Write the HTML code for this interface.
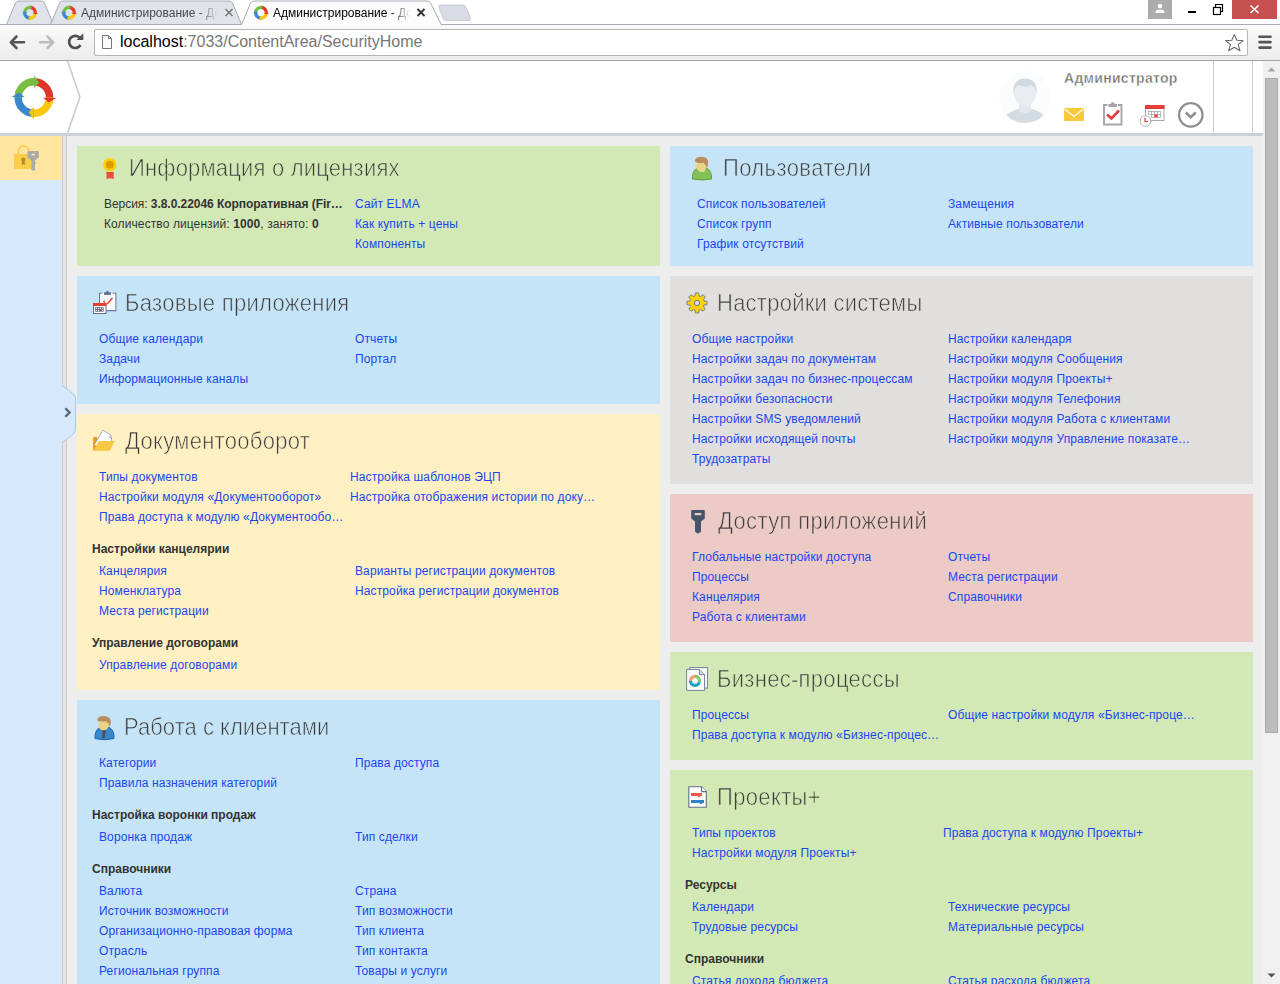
<!DOCTYPE html><html><head><meta charset="utf-8"><title>ELMA</title><style>
html,body{margin:0;padding:0;width:1280px;height:984px;overflow:hidden;background:#ededed;font-family:"Liberation Sans",sans-serif}
.p,.l,.h,.t,.i,.a{position:absolute}
.l{font-size:12px;line-height:20px;color:#1a46f2;white-space:nowrap;letter-spacing:0.12px}
.h{font-size:12px;line-height:20px;color:#333;font-weight:bold;white-space:nowrap}
.tx{font-size:12px;line-height:20px;color:#333;white-space:nowrap;position:absolute;letter-spacing:0.1px}
.t{font-size:22px;line-height:26px;color:#3a3a3a;white-space:nowrap;letter-spacing:0.2px;transform:scaleY(1.07);transform-origin:0 20px}
</style></head><body>
<div class="a" style="left:0;top:0;width:1280px;height:25px;background:#fff"></div>
<div class="a" style="left:0;top:24px;width:1280px;height:36px;background:linear-gradient(#fafafa,#ececec);border-top:1px solid #a9aeb5;box-sizing:border-box"></div>
<div class="a" style="left:0;top:60px;width:1280px;height:1px;background:#a3a3a3"></div>
<div class="a" style="left:94px;top:29px;width:1154px;height:27px;background:#fff;border:1px solid #b5b5b5;border-radius:2px;box-sizing:border-box"></div>
<div class="a" style="left:120px;top:32px;font-size:16px;line-height:20px;color:#777;white-space:nowrap"><span style="color:#000">localhost</span>:7033/ContentArea/SecurityHome</div>
<svg class="a" style="left:0;top:0" width="1280" height="25"><path d="M6.5 24.5 L15.5 3 Q16.5 1 19 1 L41 1 Q43.5 1 44.5 3 L53.5 24.5" fill="#dfe3ea" stroke="#a7acb4" stroke-width="1"/><path d="M50.5 24.5 L59.5 3 Q60.5 1 63 1 L229 1 Q231.5 1 232.5 3 L241.5 24.5" fill="#dfe3ea" stroke="#a7acb4" stroke-width="1"/><path d="M0 24.5 L1280 24.5" stroke="#a8adb4" stroke-width="1"/><path d="M241.5 25 L250.5 3 Q251.5 1 254 1 L427 1 Q429.5 1 430.5 3 L441.5 25" fill="#fcfcfc" stroke="#a7acb4" stroke-width="1"/><path d="M441 5 L463 5 Q465 5 466 7 L470.5 18.5 Q471 20.5 468.5 20.5 L446 20.5 Q444 20.5 443 18.5 L439 7 Q438.5 5 441 5Z" fill="#d8dde5" stroke="#b9bec6" stroke-width="0.7"/></svg>
<svg class="a" style="left:0;top:0" width="480" height="25"><path d="M30.00 7.40 A5.4 5.4 0 0 1 35.39 13.18" stroke="#e0352b" stroke-width="3.3" fill="none"/><path d="M35.40 12.80 A5.4 5.4 0 0 1 29.62 18.19" stroke="#fcc60a" stroke-width="3.3" fill="none"/><path d="M30.00 18.20 A5.4 5.4 0 0 1 24.61 12.42" stroke="#3a86cf" stroke-width="3.3" fill="none"/><path d="M24.60 12.80 A5.4 5.4 0 0 1 30.38 7.41" stroke="#78be43" stroke-width="3.3" fill="none"/><path d="M38.30 12.94 L35.11 14.56 L32.50 12.84Z" fill="#e0352b"/><path d="M29.86 21.10 L28.24 17.91 L29.96 15.30Z" fill="#fcc60a"/><path d="M21.70 12.66 L24.89 11.04 L27.50 12.76Z" fill="#3a86cf"/><path d="M30.14 4.50 L31.76 7.69 L30.04 10.30Z" fill="#78be43"/><path d="M69.00 7.40 A5.4 5.4 0 0 1 74.39 13.18" stroke="#e0352b" stroke-width="3.3" fill="none"/><path d="M74.40 12.80 A5.4 5.4 0 0 1 68.62 18.19" stroke="#fcc60a" stroke-width="3.3" fill="none"/><path d="M69.00 18.20 A5.4 5.4 0 0 1 63.61 12.42" stroke="#3a86cf" stroke-width="3.3" fill="none"/><path d="M63.60 12.80 A5.4 5.4 0 0 1 69.38 7.41" stroke="#78be43" stroke-width="3.3" fill="none"/><path d="M77.30 12.94 L74.11 14.56 L71.50 12.84Z" fill="#e0352b"/><path d="M68.86 21.10 L67.24 17.91 L68.96 15.30Z" fill="#fcc60a"/><path d="M60.70 12.66 L63.89 11.04 L66.50 12.76Z" fill="#3a86cf"/><path d="M69.14 4.50 L70.76 7.69 L69.04 10.30Z" fill="#78be43"/><path d="M261.00 7.40 A5.4 5.4 0 0 1 266.39 13.18" stroke="#e0352b" stroke-width="3.3" fill="none"/><path d="M266.40 12.80 A5.4 5.4 0 0 1 260.62 18.19" stroke="#fcc60a" stroke-width="3.3" fill="none"/><path d="M261.00 18.20 A5.4 5.4 0 0 1 255.61 12.42" stroke="#3a86cf" stroke-width="3.3" fill="none"/><path d="M255.60 12.80 A5.4 5.4 0 0 1 261.38 7.41" stroke="#78be43" stroke-width="3.3" fill="none"/><path d="M269.30 12.94 L266.11 14.56 L263.50 12.84Z" fill="#e0352b"/><path d="M260.86 21.10 L259.24 17.91 L260.96 15.30Z" fill="#fcc60a"/><path d="M252.70 12.66 L255.89 11.04 L258.50 12.76Z" fill="#3a86cf"/><path d="M261.14 4.50 L262.76 7.69 L261.04 10.30Z" fill="#78be43"/></svg>
<div class="a" style="left:81px;top:5px;font-size:12px;line-height:16px;color:#4a4a4a;white-space:nowrap;width:137px;overflow:hidden;-webkit-mask-image:linear-gradient(90deg,#000 85%,transparent)">Администрирование - Документооборот</div>
<div class="a" style="left:273px;top:5px;font-size:12px;line-height:16px;color:#000;white-space:nowrap;width:137px;overflow:hidden;-webkit-mask-image:linear-gradient(90deg,#000 85%,transparent)">Администрирование - Документооборот</div>
<svg class="a" style="left:0;top:0" width="480" height="25"><path d="M225.5 9 L232.5 16 M232.5 9 L225.5 16" stroke="#787878" stroke-width="1.6"/><path d="M417.5 9 L424.5 16 M424.5 9 L417.5 16" stroke="#333" stroke-width="1.8"/></svg>
<div class="a" style="left:1148px;top:0;width:24px;height:19px;background:#acacac"></div>
<svg class="a" style="left:1148px;top:0" width="24" height="19"><circle cx="12" cy="6" r="2.3" fill="#fff"/><path d="M7.5 12.5 Q7.5 9.5 12 9.5 Q16.5 9.5 16.5 12.5 L16.5 13 L7.5 13Z" fill="#fff"/></svg>
<div class="a" style="left:1188px;top:11px;width:8px;height:2px;background:#000"></div>
<svg class="a" style="left:1210px;top:2px" width="16" height="14"><rect x="3.5" y="5.5" width="7" height="7" fill="none" stroke="#000" stroke-width="1.2"/><path d="M5.5 5.5 L5.5 2.5 L12.5 2.5 L12.5 9.5 L10.5 9.5" fill="none" stroke="#000" stroke-width="1.2"/></svg>
<div class="a" style="left:1232px;top:0;width:45px;height:19px;background:#c75050"></div>
<svg class="a" style="left:1232px;top:0" width="45" height="19"><path d="M18.5 5.5 L26.5 13 M26.5 5.5 L18.5 13" stroke="#fff" stroke-width="1.6"/></svg>
<svg class="a" style="left:0;top:25px" width="94" height="35"><path d="M11 17.3 L24 17.3 M16.5 11.5 L10.8 17.3 L16.5 23" stroke="#555" stroke-width="2.6" fill="none" stroke-linecap="round" stroke-linejoin="round"/><path d="M40 17.3 L53 17.3 M47.5 11.5 L53.2 17.3 L47.5 23" stroke="#bdbdbd" stroke-width="2.6" fill="none" stroke-linecap="round" stroke-linejoin="round"/><path d="M80.5 20 A6.1 6.1 0 1 1 79.6 12.6" stroke="#505050" stroke-width="2.7" fill="none"/><path d="M76.5 15 L83.3 15 L83.3 8.2Z" fill="#505050"/></svg>
<svg class="a" style="left:100px;top:33px" width="14" height="18"><path d="M2.5 2.5 L8.5 2.5 L11.5 5.5 L11.5 15.5 L2.5 15.5Z" fill="#fbfbfb" stroke="#777" stroke-width="1"/><path d="M8.5 2.5 L8.5 5.5 L11.5 5.5" fill="none" stroke="#777" stroke-width="1"/></svg>
<svg class="a" style="left:1224px;top:33px" width="22" height="20"><path d="M10.3 1.5 L12.8 7.3 L19 7.6 L14.2 11.6 L15.9 17.7 L10.3 14.2 L4.7 17.7 L6.4 11.6 L1.6 7.6 L7.8 7.3Z" fill="none" stroke="#6b6b6b" stroke-width="1.1" stroke-linejoin="round"/></svg>
<svg class="a" style="left:1256px;top:34px" width="18" height="16"><path d="M3.5 2.7 L14.5 2.7 M3.5 8.1 L14.5 8.1 M3.5 13.6 L14.5 13.6" stroke="#555" stroke-width="2.6" stroke-linecap="round"/></svg>
<div class="a" style="left:0;top:61px;width:1263px;height:72px;background:#fff"></div>
<div class="a" style="left:0;top:133px;width:1263px;height:3px;background:#cdd1d6"></div>
<div class="a" style="left:1213px;top:61px;width:1px;height:72px;background:#c9ced6"></div>
<div class="a" style="left:1252px;top:61px;width:1px;height:72px;background:#c9ced6"></div>
<div class="a" style="left:1064px;top:68px;font-size:14px;line-height:20px;font-weight:bold;color:#6e6e6e;white-space:nowrap;letter-spacing:0.3px;-webkit-text-stroke:0.35px #fff">Администратор</div>
<svg class="a" style="left:0;top:61px" width="90" height="72"><path d="M33.90 20.80 A15.7 15.7 0 0 1 49.56 37.60" stroke="#e0352b" stroke-width="7.4" fill="none"/><path d="M49.60 36.50 A15.7 15.7 0 0 1 32.80 52.16" stroke="#fcc60a" stroke-width="7.4" fill="none"/><path d="M33.90 52.20 A15.7 15.7 0 0 1 18.24 35.40" stroke="#3a86cf" stroke-width="7.4" fill="none"/><path d="M18.20 36.50 A15.7 15.7 0 0 1 35.00 20.84" stroke="#78be43" stroke-width="7.4" fill="none"/><path d="M56.11 36.89 L48.74 41.61 L43.09 36.66Z" fill="#e0352b"/><path d="M33.51 58.71 L28.79 51.34 L33.74 45.69Z" fill="#fcc60a"/><path d="M11.69 36.11 L19.06 31.39 L24.71 36.34Z" fill="#3a86cf"/><path d="M34.29 14.29 L39.01 21.66 L34.06 27.31Z" fill="#78be43"/><path d="M67.5 0 L80 36 L67.5 72" fill="none" stroke="#c8ccd2" stroke-width="1.6"/></svg>
<svg class="a" style="left:998px;top:70px" width="54" height="54"><defs><clipPath id="avc"><circle cx="27" cy="27" r="26"/></clipPath></defs><circle cx="27" cy="27" r="26" fill="#fbfcfd"/><g clip-path="url(#avc)"><path d="M4 52 Q8 42 20 39 L34 39 Q46 42 50 52 L50 56 L4 56Z" fill="#d3dbe3"/><path d="M21 33 L21 41 Q27 45 33 41 L33 33Z" fill="#e3e8ee"/><ellipse cx="27" cy="23" rx="11" ry="13" fill="#e8edf2"/><path d="M15.5 24 Q14 9 27 8.5 Q40 9 38.5 24 Q37 16 33 15 Q27 18 21 15 Q17 16 15.5 24Z" fill="#d0d8e1"/></g></svg>
<svg class="a" style="left:1064px;top:108px" width="21" height="14"><rect x="0" y="0" width="20" height="13" rx="0.8" fill="#f9c93d"/><path d="M0.5 1 L10 8.5 L19.5 1" fill="none" stroke="#fff" stroke-width="1.2"/></svg>
<svg class="a" style="left:1102px;top:102px" width="22" height="25"><path d="M5.5 3 L2 3 L2 22.5 L19.5 22.5 L19.5 3 L16 3" fill="#fff" stroke="#a6a6a6" stroke-width="1.9"/><rect x="6.5" y="2" width="8.5" height="3" fill="#a6a6a6"/><rect x="9" y="0.2" width="3.5" height="2.5" rx="1" fill="#a6a6a6"/><path d="M5 12.5 L9.5 16.5 L17 8.5" fill="none" stroke="#e63c3c" stroke-width="2.6"/></svg>
<svg class="a" style="left:1139px;top:104px" width="28" height="24"><rect x="6.5" y="1.5" width="18.5" height="15" fill="#fff" stroke="#a8a8a8" stroke-width="1"/><rect x="6" y="1" width="19.5" height="4" fill="#e63c3c"/><g fill="#fff" stroke="#a8a8a8" stroke-width="0.8"><rect x="9.5" y="7.5" width="3" height="3"/><rect x="12.5" y="7.5" width="3" height="3"/><rect x="15.5" y="7.5" width="3" height="3"/><rect x="18.5" y="7.5" width="3" height="3"/><rect x="12.5" y="10.5" width="3" height="3"/><rect x="18.5" y="10.5" width="3" height="3"/></g><rect x="15.5" y="10.5" width="3" height="3" fill="#e63c3c"/><circle cx="6.5" cy="17" r="5.3" fill="#fff" stroke="#aaa" stroke-width="0.9"/><path d="M6 13.8 L6 17.5 L9 17.5" fill="none" stroke="#e63c3c" stroke-width="1.2"/></svg>
<svg class="a" style="left:1177px;top:101px" width="28" height="28"><circle cx="13.8" cy="13.9" r="11.7" fill="none" stroke="#8e8e8e" stroke-width="2.2"/><path d="M8.8 11.5 L13.8 16.3 L18.8 11.5" fill="none" stroke="#8e8e8e" stroke-width="2.6"/></svg>
<div class="a" style="left:0;top:136px;width:62px;height:848px;background:#d6e8fb"></div>
<div class="a" style="left:0;top:136px;width:62px;height:44px;background:#ffe6a0"></div>
<div class="a" style="left:62px;top:136px;width:5px;height:848px;background:#e4e4e4;border-left:1px solid #c9c9c9;border-right:1px solid #c9c9c9;box-sizing:border-box"></div>
<svg class="a" style="left:8px;top:140px" width="40" height="40"><path d="M10.5 14.5 L10.5 11 A5.1 5.1 0 0 1 20.7 11 L20.7 14.5" fill="none" stroke="#fccd48" stroke-width="1.9"/><rect x="6" y="14" width="17" height="15" rx="1.2" fill="#fccd48"/><circle cx="15.3" cy="19.5" r="2" fill="#b9862c"/><path d="M14.2 20 L16.4 20 L17 24.5 L13.6 24.5Z" fill="#b9862c"/><path d="M19.5 12 Q19.5 11 20.5 11 L29.8 11 Q30.8 11 30.8 12 L30.8 17.5 L27 20.5 L27 30 Q25 31.5 23.2 30 L23.2 20.5 L19.5 17.5Z" fill="#ababab"/><rect x="23.2" y="13.8" width="4" height="1.6" rx="0.8" fill="#fde7a0"/><rect x="26.5" y="22.5" width="1.5" height="1.5" fill="#ababab"/></svg>
<svg class="a" style="left:55px;top:380px" width="24" height="68"><path d="M0 5.5 L7 5.5 C12 9 20.5 14 20.5 18.5 L20.5 49.5 C20.5 54 12 59 7 62.5 L0 62.5Z" fill="#d6e8fb"/><path d="M7 5.5 C12 9 20.5 14 20.5 18.5 L20.5 49.5 C20.5 54 12 59 7 62.5" fill="none" stroke="#a9c8ea" stroke-width="1"/><path d="M10.3 28.2 L14.6 32.5 L10.3 36.8" fill="none" stroke="#56647a" stroke-width="2.3"/></svg>
<div class="a" style="left:1263px;top:61px;width:17px;height:923px;background:#f0f0f0"></div>
<div class="a" style="left:1265px;top:78px;width:13px;height:655px;background:#bcbcbc;border:1px solid #a9a9a9;box-sizing:border-box"></div>
<div class="p" style="left:77px;top:146px;width:583px;height:120px;background:#d3e9b5"></div>
<div class="p" style="left:77px;top:276px;width:583px;height:128px;background:#c6e4f7"></div>
<div class="p" style="left:77px;top:414px;width:583px;height:276px;background:#fff0c4"></div>
<div class="p" style="left:77px;top:700px;width:583px;height:300px;background:#c6e4f7"></div>
<div class="p" style="left:670px;top:146px;width:583px;height:120px;background:#c6e4f7"></div>
<div class="p" style="left:670px;top:276px;width:583px;height:208px;background:#e0dfdd"></div>
<div class="p" style="left:670px;top:494px;width:583px;height:148px;background:#eccbc6"></div>
<div class="p" style="left:670px;top:652px;width:583px;height:108px;background:#d3e9b5"></div>
<div class="p" style="left:670px;top:770px;width:583px;height:300px;background:#d3e9b5"></div>
<div class="t" style="left:129px;top:156px;letter-spacing:0.2px;-webkit-text-stroke:0.6px #d3e9b5">Информация о лицензиях</div>
<div class="tx" style="left:104px;top:194px;letter-spacing:-0.05px">Версия: <b>3.8.0.22046 Корпоративная (Fir…</b></div>
<div class="tx" style="left:104px;top:214px">Количество лицензий: <b>1000</b>, занято: <b>0</b></div>
<div class="l" style="left:355px;top:194px">Сайт ELMA</div>
<div class="l" style="left:355px;top:214px">Как купить + цены</div>
<div class="l" style="left:355px;top:234px">Компоненты</div>
<div class="t" style="left:125px;top:291px;letter-spacing:0.3px;-webkit-text-stroke:0.6px #c6e4f7">Базовые приложения</div>
<div class="l" style="left:99px;top:329px">Общие календари</div>
<div class="l" style="left:99px;top:349px">Задачи</div>
<div class="l" style="left:99px;top:369px">Информационные каналы</div>
<div class="l" style="left:355px;top:329px">Отчеты</div>
<div class="l" style="left:355px;top:349px">Портал</div>
<div class="t" style="left:125px;top:429px;letter-spacing:0.3px;-webkit-text-stroke:0.6px #fff0c4">Документооборот</div>
<div class="l" style="left:99px;top:467px">Типы документов</div>
<div class="l" style="left:99px;top:487px">Настройки модуля «Документооборот»</div>
<div class="l" style="left:99px;top:507px">Права доступа к модулю «Документообо…</div>
<div class="l" style="left:350px;top:467px">Настройка шаблонов ЭЦП</div>
<div class="l" style="left:350px;top:487px">Настройка отображения истории по доку…</div>
<div class="h" style="left:92px;top:539px">Настройки канцелярии</div>
<div class="l" style="left:99px;top:561px">Канцелярия</div>
<div class="l" style="left:99px;top:581px">Номенклатура</div>
<div class="l" style="left:99px;top:601px">Места регистрации</div>
<div class="l" style="left:355px;top:561px">Варианты регистрации документов</div>
<div class="l" style="left:355px;top:581px">Настройка регистрации документов</div>
<div class="h" style="left:92px;top:633px">Управление договорами</div>
<div class="l" style="left:99px;top:655px">Управление договорами</div>
<div class="t" style="left:124px;top:715px;letter-spacing:0.03px;-webkit-text-stroke:0.6px #c6e4f7">Работа с клиентами</div>
<div class="l" style="left:99px;top:753px">Категории</div>
<div class="l" style="left:99px;top:773px">Правила назначения категорий</div>
<div class="l" style="left:355px;top:753px">Права доступа</div>
<div class="h" style="left:92px;top:805px">Настройка воронки продаж</div>
<div class="l" style="left:99px;top:827px">Воронка продаж</div>
<div class="l" style="left:355px;top:827px">Тип сделки</div>
<div class="h" style="left:92px;top:859px">Справочники</div>
<div class="l" style="left:99px;top:881px">Валюта</div>
<div class="l" style="left:99px;top:901px">Источник возможности</div>
<div class="l" style="left:99px;top:921px">Организационно-правовая форма</div>
<div class="l" style="left:99px;top:941px">Отрасль</div>
<div class="l" style="left:99px;top:961px">Региональная группа</div>
<div class="l" style="left:355px;top:881px">Страна</div>
<div class="l" style="left:355px;top:901px">Тип возможности</div>
<div class="l" style="left:355px;top:921px">Тип клиента</div>
<div class="l" style="left:355px;top:941px">Тип контакта</div>
<div class="l" style="left:355px;top:961px">Товары и услуги</div>
<div class="t" style="left:723px;top:156px;letter-spacing:0.4px;-webkit-text-stroke:0.6px #c6e4f7">Пользователи</div>
<div class="l" style="left:697px;top:194px">Список пользователей</div>
<div class="l" style="left:697px;top:214px">Список групп</div>
<div class="l" style="left:697px;top:234px">График отсутствий</div>
<div class="l" style="left:948px;top:194px">Замещения</div>
<div class="l" style="left:948px;top:214px">Активные пользователи</div>
<div class="t" style="left:717px;top:291px;letter-spacing:0.25px;-webkit-text-stroke:0.6px #e0dfdd">Настройки системы</div>
<div class="l" style="left:692px;top:329px">Общие настройки</div>
<div class="l" style="left:692px;top:349px">Настройки задач по документам</div>
<div class="l" style="left:692px;top:369px">Настройки задач по бизнес-процессам</div>
<div class="l" style="left:692px;top:389px">Настройки безопасности</div>
<div class="l" style="left:692px;top:409px">Настройки SMS уведомлений</div>
<div class="l" style="left:692px;top:429px">Настройки исходящей почты</div>
<div class="l" style="left:692px;top:449px">Трудозатраты</div>
<div class="l" style="left:948px;top:329px">Настройки календаря</div>
<div class="l" style="left:948px;top:349px">Настройки модуля Сообщения</div>
<div class="l" style="left:948px;top:369px">Настройки модуля Проекты+</div>
<div class="l" style="left:948px;top:389px">Настройки модуля Телефония</div>
<div class="l" style="left:948px;top:409px">Настройки модуля Работа с клиентами</div>
<div class="l" style="left:948px;top:429px">Настройки модуля Управление показате…</div>
<div class="t" style="left:718px;top:509px;letter-spacing:0.36px;-webkit-text-stroke:0.6px #eccbc6">Доступ приложений</div>
<div class="l" style="left:692px;top:547px">Глобальные настройки доступа</div>
<div class="l" style="left:692px;top:567px">Процессы</div>
<div class="l" style="left:692px;top:587px">Канцелярия</div>
<div class="l" style="left:692px;top:607px">Работа с клиентами</div>
<div class="l" style="left:948px;top:547px">Отчеты</div>
<div class="l" style="left:948px;top:567px">Места регистрации</div>
<div class="l" style="left:948px;top:587px">Справочники</div>
<div class="t" style="left:717px;top:667px;letter-spacing:0.3px;-webkit-text-stroke:0.6px #d3e9b5">Бизнес-процессы</div>
<div class="l" style="left:692px;top:705px">Процессы</div>
<div class="l" style="left:692px;top:725px">Права доступа к модулю «Бизнес-процес…</div>
<div class="l" style="left:948px;top:705px">Общие настройки модуля «Бизнес-проце…</div>
<div class="t" style="left:717px;top:785px;letter-spacing:0.35px;-webkit-text-stroke:0.6px #d3e9b5">Проекты+</div>
<div class="l" style="left:692px;top:823px">Типы проектов</div>
<div class="l" style="left:692px;top:843px">Настройки модуля Проекты+</div>
<div class="l" style="left:943px;top:823px">Права доступа к модулю Проекты+</div>
<div class="h" style="left:685px;top:875px">Ресурсы</div>
<div class="l" style="left:692px;top:897px">Календари</div>
<div class="l" style="left:692px;top:917px">Трудовые ресурсы</div>
<div class="l" style="left:948px;top:897px">Технические ресурсы</div>
<div class="l" style="left:948px;top:917px">Материальные ресурсы</div>
<div class="h" style="left:685px;top:949px">Справочники</div>
<div class="l" style="left:692px;top:971px">Статья дохода бюджета</div>
<div class="l" style="left:948px;top:971px">Статья расхода бюджета</div>
<svg class="a" style="left:100px;top:155px" width="20" height="26"><path d="M6.2 17 L14 17 Q13.2 20.5 14 24 Q10.1 22.3 6.2 24 Q7 20.5 6.2 17Z" fill="#e84e3c"/><circle cx="9.8" cy="9.7" r="6.8" fill="#fdd00a"/><circle cx="9.8" cy="9.7" r="4" fill="#dc9c00"/></svg>
<svg class="a" style="left:690px;top:155px" width="24" height="26"><path d="M2.5 24 Q1.8 16 7 13.5 L17 13.5 Q22.2 16 21.5 24 Q12 26 2.5 24Z" fill="#82c155" stroke="#5a9a30" stroke-width="0.9"/><path d="M8.5 15.5 L10.8 17 L12 16 L13.2 17 L15.5 15.5Z" fill="#fff"/><ellipse cx="11.3" cy="11.2" rx="5.3" ry="5.2" fill="#ecd284"/><path d="M4.8 6 Q5.5 1.8 11.5 1.8 Q18.5 2 18.1 8.5 Q18 11.5 16.8 13.2 Q16 11 15.8 10 Q14.2 9.5 13.8 7.5 Q9.5 8.5 6.8 7.5 Q4.8 7 4.8 6Z" fill="#b98d5c"/></svg>
<svg class="a" style="left:90px;top:288px" width="30" height="30"><path d="M12.5 5.3 L9.6 5.3 L9.6 22.6 L25.8 22.6 L25.8 5.3 L22.5 5.3" fill="#fff" stroke="#5e7290" stroke-width="1.1"/><rect x="10.2" y="5.8" width="15" height="16.3" fill="#fff"/><rect x="14" y="4.3" width="7" height="2.6" fill="#5e7290"/><circle cx="17.4" cy="4" r="1.3" fill="#5e7290"/><path d="M13.5 13 L15 14.5 M17 16 L22.5 10" fill="none" stroke="#e84030" stroke-width="1.6"/><rect x="3.5" y="15.5" width="12.5" height="10" fill="#fff" stroke="#5e7290" stroke-width="1"/><rect x="3" y="15" width="13.5" height="3" fill="#e84030"/><rect x="5.2" y="19.2" width="8.5" height="4.5" fill="#5e7290"/><g fill="#fff"><rect x="6" y="20" width="1" height="1"/><rect x="8" y="20" width="1" height="1"/><rect x="10" y="20" width="1" height="1"/><rect x="12" y="20" width="1" height="1"/><rect x="6" y="22" width="1" height="1"/><rect x="8" y="22" width="1" height="1"/><rect x="12" y="22" width="1" height="1"/></g><rect x="10" y="21" width="1.6" height="1.8" fill="#e84030"/></svg>
<svg class="a" style="left:88px;top:422px" width="32" height="36"><path d="M5.2 15.5 Q5.2 15 6 15 L9 15 L9 28.5 L5.2 28.5Z" fill="#e8961e"/><path d="M6.5 22.5 L15 8.2 L22.8 13 L23.8 18.8 L10 27Z" fill="#fff" stroke="#9aa5b3" stroke-width="0.9"/><path d="M20.5 16.5 L22 14.5 L23.5 17.2" fill="none" stroke="#9aa5b3" stroke-width="0.8"/><path d="M5.2 28.8 L10.8 19 L26.8 19 L21.8 28.8Z" fill="#f8c842"/></svg>
<svg class="a" style="left:90px;top:712px" width="28" height="30"><path d="M5 26.5 Q4.5 19 9.5 15.5 L19.5 15.5 Q24.5 19 24 26.5 Q14.5 29 5 26.5Z" fill="#3d87c8" stroke="#1563bd" stroke-width="1"/><path d="M12.8 17.5 L14.5 16.8 L16 17.5 L14.5 26.5 L12 26Z" fill="#4c5058"/><path d="M11 15.5 L13 17 L14.5 16.5 L16 17 L18 15.5Z" fill="#fff"/><ellipse cx="13.6" cy="13" rx="5.3" ry="5.2" fill="#ecd284"/><path d="M7.2 8 Q8 4 13.5 3.9 Q20.5 4 20.9 10 Q20.8 13 19.5 14.5 Q18.8 12.5 18.6 11.5 Q17 11 16.5 9.2 Q12 10 9 9.2 Q7 8.8 7.2 8Z" fill="#b98d5c"/></svg>
<svg class="a" style="left:682px;top:288px" width="30" height="30"><polygon points="12.87,8.02 13.40,4.93 16.60,4.93 17.13,8.02 18.43,8.55 21.00,6.75 23.25,9.00 21.45,11.57 21.98,12.87 25.07,13.40 25.07,16.60 21.98,17.13 21.45,18.43 23.25,21.00 21.00,23.25 18.43,21.45 17.13,21.98 16.60,25.07 13.40,25.07 12.87,21.98 11.57,21.45 9.00,23.25 6.75,21.00 8.55,18.43 8.02,17.13 4.93,16.60 4.93,13.40 8.02,12.87 8.55,11.57 6.75,9.00 9.00,6.75 11.57,8.55" fill="#fdd000" stroke="#5d6b92" stroke-width="0.8" stroke-linejoin="round"/><circle cx="15" cy="15" r="2.6" fill="#e0dfdd" stroke="#5d6b92" stroke-width="0.9"/></svg>
<svg class="a" style="left:682px;top:504px" width="30" height="34"><path d="M9.2 7 Q9.2 6 10.2 6 L21.8 6 Q22.8 6 22.8 7 L22.8 14.5 L19 17.5 L19 27.5 Q17 29.5 16 29.5 Q15 29.5 13 27.5 L13 17.5 L9.2 14.5Z" fill="#44556a"/><rect x="12.7" y="9" width="6.6" height="2.2" fill="#ecc9c4"/></svg>
<svg class="a" style="left:682px;top:662px" width="30" height="34"><rect x="7.8" y="5.6" width="17.8" height="20.5" fill="#f4f6fa" stroke="#6b7a92" stroke-width="0.9"/><path d="M4.6 7.5 L17.4 7.5 L22.5 12.6 L22.5 28.4 L4.6 28.4Z" fill="#fbfbfd" stroke="#6b7a92" stroke-width="0.9"/><path d="M17.4 7.5 L17.4 12.6 L22.5 12.6" fill="#c8d6e8" stroke="#6b7a92" stroke-width="0.9"/><path d="M8.50 18.90 A4.5 4.5 0 0 1 13.00 14.40" fill="none" stroke="#f59a7a" stroke-width="3.2"/><path d="M13.00 14.40 A4.5 4.5 0 0 1 17.35 20.06" fill="none" stroke="#7cd060" stroke-width="3.2"/><path d="M17.35 20.06 A4.5 4.5 0 0 1 8.50 18.90" fill="none" stroke="#22a0c0" stroke-width="3.2"/></svg>
<svg class="a" style="left:684px;top:782px" width="28" height="28"><path d="M4.8 4.8 L17.5 4.8 L22.3 9.6 L22.3 25.2 L4.8 25.2Z" fill="#fff" stroke="#607088" stroke-width="1.1" stroke-linejoin="round"/><path d="M17.5 4.8 L17.5 9.6 L22.3 9.6" fill="#fff" stroke="#607088" stroke-width="1.1"/><rect x="7" y="11" width="11" height="3" fill="#e85a4a"/><path d="M13.5 14 L15 15.5 L16.5 14Z" fill="#e85a4a"/><rect x="7" y="18" width="13" height="3" fill="#2f82c8"/><path d="M15.5 21 L17 22.6 L18.5 21Z" fill="#2f82c8"/></svg>
<svg class="a" style="left:1263px;top:61px" width="17" height="17"><path d="M4.5 10.5 L8.5 6.5 L12.5 10.5Z" fill="#a3a3a3"/></svg>
<svg class="a" style="left:1263px;top:967px" width="17" height="17"><path d="M4.5 6.5 L8.5 10.5 L12.5 6.5Z" fill="#505050"/></svg>
</body></html>
